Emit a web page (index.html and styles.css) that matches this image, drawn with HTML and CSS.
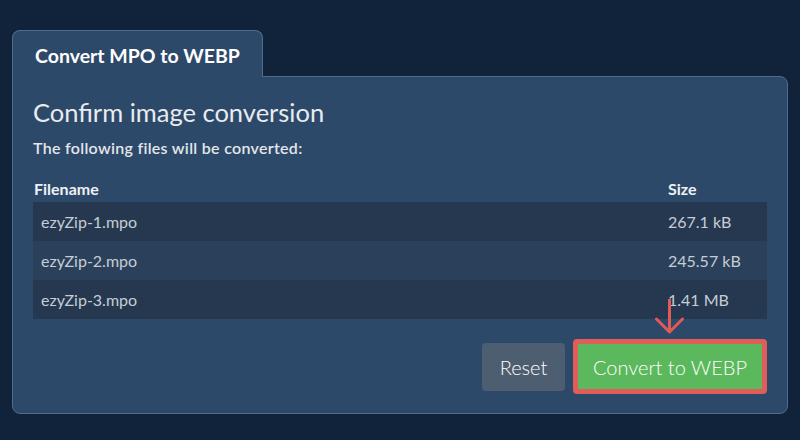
FILE: index.html
```html
<!DOCTYPE html>
<html lang="en">
<head>
<meta charset="utf-8">
<title>Convert MPO to WEBP</title>
<link rel="stylesheet" href="styles.css">
</head>
<body>
<div class="wrap">
  <div class="tabs">
    <div class="tab">Convert MPO to WEBP</div>
  </div>
  <div class="panel">
    <h2 class="title">Confirm image conversion</h2>
    <p class="lead">The following files will be converted:</p>
    <table class="files">
      <thead>
        <tr><th class="c-name">Filename</th><th class="c-size">Size</th></tr>
      </thead>
      <tbody>
        <tr><td class="c-name">ezyZip-1.mpo</td><td class="c-size">267.1 kB</td></tr>
        <tr><td class="c-name">ezyZip-2.mpo</td><td class="c-size">245.57 kB</td></tr>
        <tr><td class="c-name">ezyZip-3.mpo</td><td class="c-size">1.41 MB</td></tr>
      </tbody>
    </table>
    <div class="actions">
      <button class="btn btn-reset">Reset</button>
      <div class="convert-wrap">
        <svg class="arrow" width="30" height="36" viewBox="0 0 30 36">
          <path d="M14.5 1 V33 M1.5 20 L14.5 33 L27.5 20" fill="none" stroke="#e05a57" stroke-width="3" stroke-linecap="round" stroke-linejoin="round"/>
        </svg>
        <button class="btn btn-convert">Convert to WEBP</button>
      </div>
    </div>
  </div>
</div>
</body>
</html>
```

FILE: styles.css
```css
* { box-sizing: border-box; }
html, body {
  margin: 0;
  padding: 0;
  background: #10233a;
  font-family: Lato, "Open Sans", sans-serif;
}
.wrap {
  padding: 30px 12px 0 12px;
  width: 800px;
}
.tabs {
  display: flex;
  position: relative;
  z-index: 2;
  margin-bottom: -1px;
}
.tab {
  background: #2d4969;
  border: 1px solid #4f6c8b;
  border-bottom: none;
  border-radius: 8px 8px 0 0;
  padding: 13px 22px 9px 22px;
  font-size: 19.5px;
  line-height: 24px;
  font-weight: 700;
  color: #ffffff;
}
.panel {
  position: relative;
  z-index: 1;
  background: #2d4969;
  border: 1px solid #4f6c8b;
  border-radius: 0 8px 8px 8px;
  padding: 19px 20px 19px 20px;
}
.title {
  margin: 0;
  font-size: 25.5px;
  line-height: 32px;
  font-weight: 400;
  color: #e8ecf0;
}
.lead {
  margin: 10px 0 0 0;
  font-size: 16px;
  line-height: 20px;
  font-weight: 600;
  letter-spacing: 0.3px;
  color: #e2e6ea;
}
.files {
  width: 100%;
  border-collapse: collapse;
  margin-top: 10px;
}
.files th {
  text-align: left;
  font-size: 16px;
  font-weight: 700;
  line-height: 19px;
  color: #eef1f4;
  padding: 11px 0 4px 1px;
}
.files td {
  font-size: 16px;
  line-height: 19px;
  color: #c6cdd5;
  height: 39px;
  padding: 0 0 0 8px;
}
.files th.c-size { width: 100px; padding-left: 1px; }
.files td.c-size { padding-left: 1px; }
.files tbody tr:nth-child(odd) { background: #253850; }
.files tbody tr:nth-child(even) { background: #2b415b; }
.actions {
  display: flex;
  justify-content: flex-end;
  align-items: center;
  gap: 8px;
  margin-top: 20px;
}
.btn {
  font-family: Lato, "Open Sans", sans-serif;
  font-size: 20px;
  font-weight: 300;
  color: #ffffff;
  border-radius: 4px;
  cursor: pointer;
}
.btn-reset {
  background: #4d5e70;
  border: none;
  height: 48px;
  width: 83px;
  padding: 0;
}
.convert-wrap {
  position: relative;
}
.btn-convert {
  display: block;
  background: #5cb85c;
  border: 5px solid #e05d5a;
  height: 55px;
  width: 194px;
  padding: 0;
}
.arrow {
  position: absolute;
  left: 82px;
  bottom: 59px;
}
```
